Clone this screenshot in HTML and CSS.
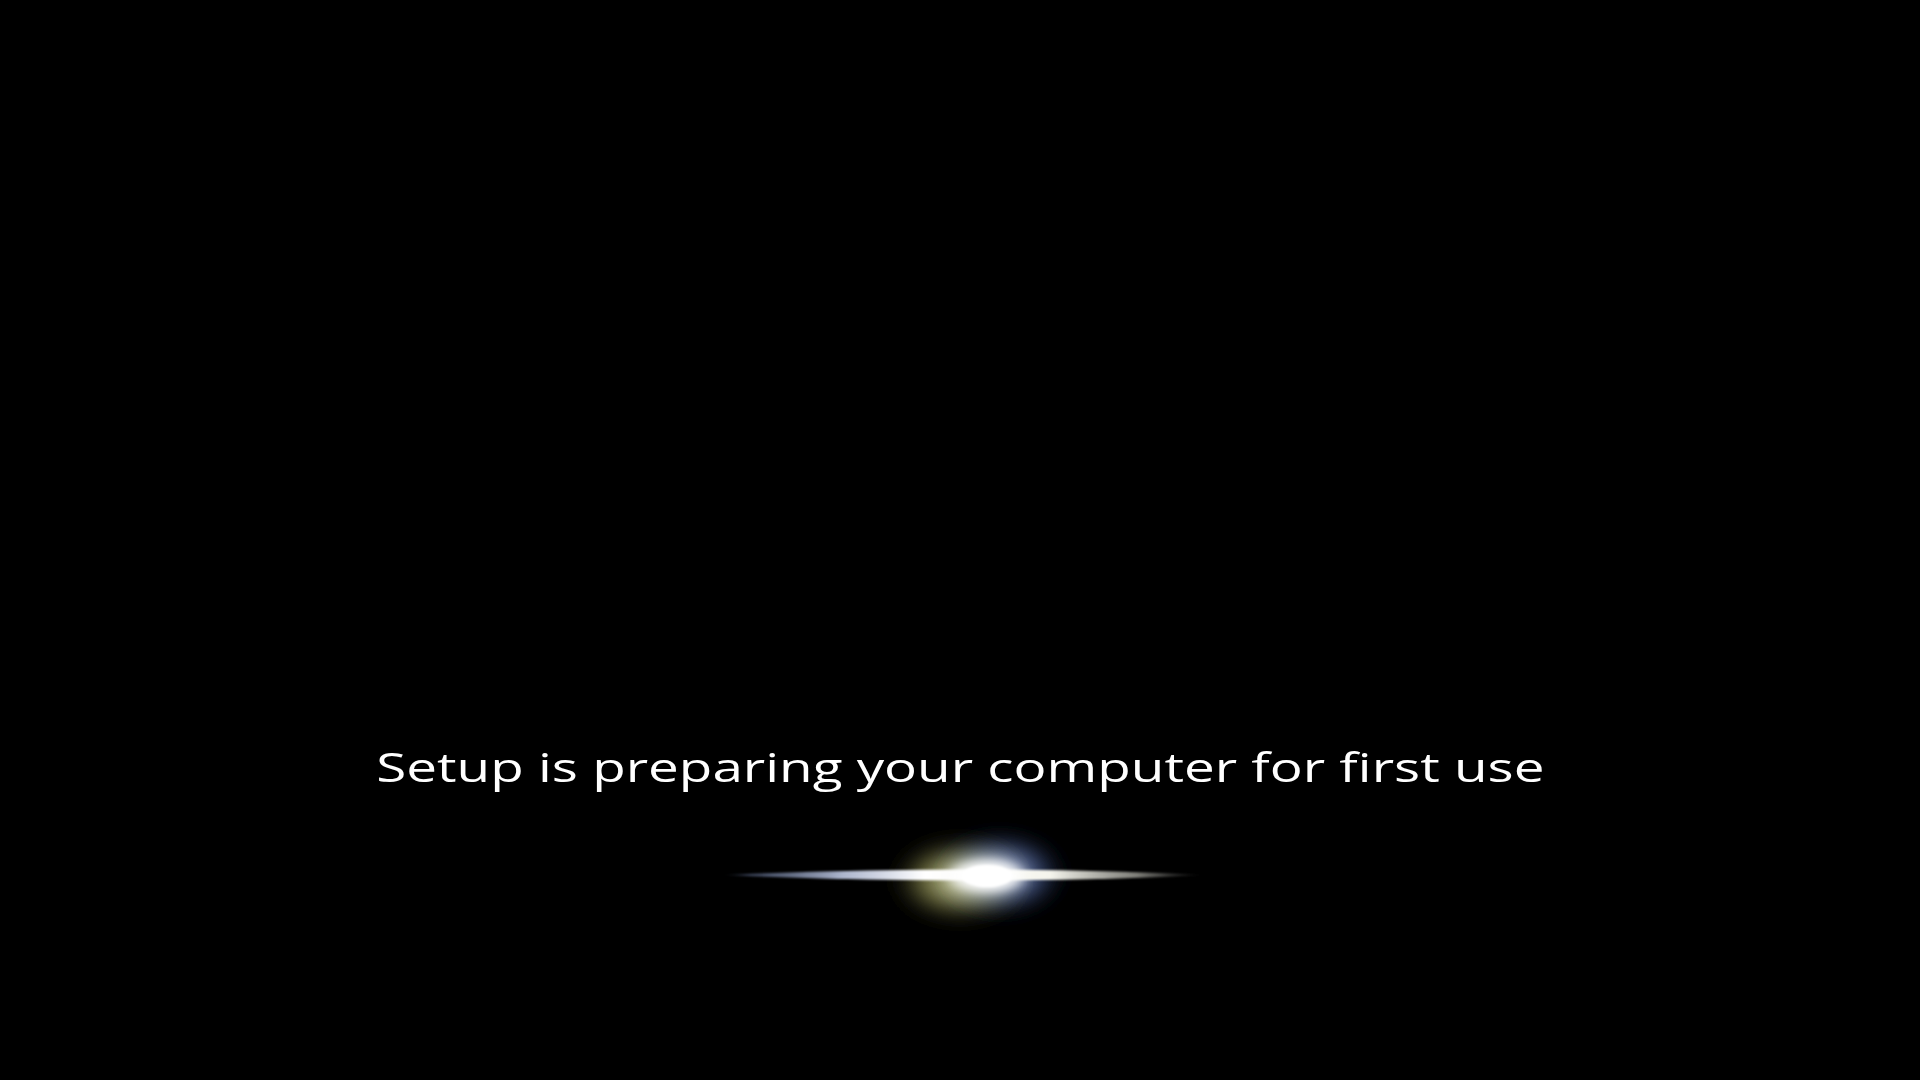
FILE: index.html
```html
<!DOCTYPE html>
<html lang="en">
<head>
<meta charset="utf-8">
<title>Setup</title>
<link rel="stylesheet" href="styles.css">
</head>
<body>
<main class="screen">
  <p class="status">Setup is preparing your computer for first use</p>
  <svg class="glow" width="600" height="120" viewBox="0 0 600 120" aria-hidden="true">
    <defs>
      <filter id="b9" x="-50%" y="-50%" width="200%" height="200%"><feGaussianBlur stdDeviation="9"/></filter>
      <filter id="b4" x="-50%" y="-50%" width="200%" height="200%"><feGaussianBlur stdDeviation="4"/></filter>
      <filter id="b1" x="-10%" y="-200%" width="120%" height="500%"><feGaussianBlur stdDeviation="1.1"/></filter>
      <linearGradient id="lineG" x1="62" y1="0" x2="545" y2="0" gradientUnits="userSpaceOnUse">
        <stop offset="0" stop-color="#5a6a90" stop-opacity="0"/>
        <stop offset="0.06" stop-color="#6a7aa0" stop-opacity="0.55"/>
        <stop offset="0.25" stop-color="#c0cae4" stop-opacity="0.9"/>
        <stop offset="0.42" stop-color="#ffffff" stop-opacity="1"/>
        <stop offset="0.68" stop-color="#f4f4ec" stop-opacity="1"/>
        <stop offset="0.86" stop-color="#a8a8a0" stop-opacity="0.75"/>
        <stop offset="1" stop-color="#606060" stop-opacity="0"/>
      </linearGradient>
      <radialGradient id="haloY" cx="0.5" cy="0.5" r="0.5">
        <stop offset="0" stop-color="#e0e0a8" stop-opacity="1"/>
        <stop offset="0.55" stop-color="#7a7a44" stop-opacity="0.8"/>
        <stop offset="1" stop-color="#202010" stop-opacity="0"/>
      </radialGradient>
      <radialGradient id="haloB" cx="0.5" cy="0.5" r="0.5">
        <stop offset="0" stop-color="#d0dcf4" stop-opacity="1"/>
        <stop offset="0.55" stop-color="#44598e" stop-opacity="0.8"/>
        <stop offset="1" stop-color="#0a1020" stop-opacity="0"/>
      </radialGradient>
      <radialGradient id="coreG" cx="0.5" cy="0.5" r="0.5">
        <stop offset="0" stop-color="#ffffff"/>
        <stop offset="0.6" stop-color="#ffffff" stop-opacity="0.9"/>
        <stop offset="1" stop-color="#ffffff" stop-opacity="0"/>
      </radialGradient>
    </defs>
    <ellipse cx="300" cy="62" rx="70" ry="44" fill="url(#haloY)" filter="url(#b9)"/>
    <ellipse cx="340" cy="56" rx="68" ry="44" fill="url(#haloB)" filter="url(#b9)" style="mix-blend-mode:screen"/>
    <path d="M62,57 Q327,46 545,57 Q327,68 62,57 Z" fill="url(#lineG)" filter="url(#b1)"/>
    <ellipse cx="327" cy="58" rx="44" ry="19" fill="url(#coreG)" filter="url(#b4)"/>
    <ellipse cx="327" cy="58" rx="25" ry="11" fill="#ffffff" filter="url(#b1)"/>
  </svg>
</main>
</body>
</html>
```
FILE: styles.css
```css
html, body {
  margin: 0;
  padding: 0;
  background: #000;
  width: 100%;
  height: 100%;
  overflow: hidden;
}

.screen {
  height: 1080px;
  display: flex;
  flex-direction: column;
  align-items: center;
  padding-top: 747px;
  box-sizing: border-box;
}

.status {
  margin: 0;
  font-family: "Open Sans", "Noto Sans", sans-serif;
  font-size: 40px;
  line-height: 40px;
  color: #ffffff;
  white-space: nowrap;
  transform: scaleX(1.37);
}

.glow {
  display: block;
  margin-top: 31px;
}
```
